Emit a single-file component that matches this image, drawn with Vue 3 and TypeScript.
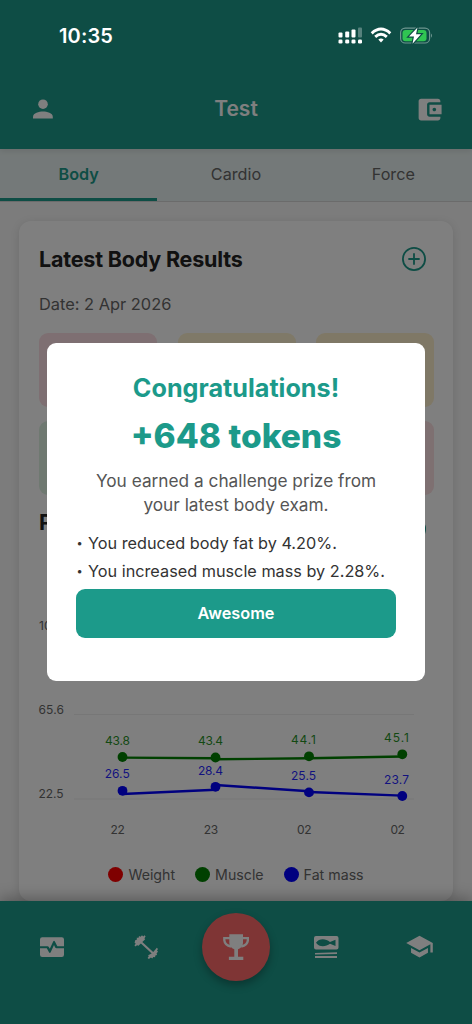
<script setup lang="ts">
interface Point { x: number; y: number; label: string; lx: number; ly: number }
interface Series { name: string; color: string; points: Point[]; segments: number[][] }

const tabs = ['Body', 'Cardio', 'Force']
const tiles = ['pink', 'yellow', 'gold', 'green', 'blue', 'rose']
const series: Series[] = [
  {
    name: 'muscle',
    color: '#008000',
    points: [
      { x: 122.5, y: 157, label: '43.8', lx: 117.5, ly: 144.5 },
      { x: 215.5, y: 157.5, label: '43.4', lx: 210.5, ly: 145 },
      { x: 309, y: 156.3, label: '44.1', lx: 303.5, ly: 143.8 },
      { x: 402.3, y: 154.3, label: '45.1', lx: 396.5, ly: 141.8 },
    ],
    segments: [[122.5, 157.6, 215.5, 158.3], [215.5, 159.3, 309, 158.3], [309, 158.3, 402, 156.5]],
  },
  {
    name: 'fat',
    color: '#0000ff',
    points: [
      { x: 122.5, y: 190.8, label: '26.5', lx: 117.2, ly: 178 },
      { x: 215.5, y: 186.8, label: '28.4', lx: 210.5, ly: 174.5 },
      { x: 309, y: 192.4, label: '25.5', lx: 303.5, ly: 180 },
      { x: 402.3, y: 196, label: '23.7', lx: 396.5, ly: 183.8 },
    ],
    segments: [[122.5, 194, 215.5, 189.8], [215.5, 185, 309, 191.2], [309, 192, 402, 195.6]],
  },
]
const axis = [
  { text: '22', x: 117.7 },
  { text: '23', x: 211 },
  { text: '02', x: 304.3 },
  { text: '02', x: 397.7 },
]
const legend = [
  { text: 'Weight', cls: 'red' },
  { text: 'Muscle', cls: 'green' },
  { text: 'Fat mass', cls: 'blue' },
]
const reasons = ['You reduced body fat by 4.20%.', 'You increased muscle mass by 2.28%.']
</script>

<template>
  <div class="screen">
    <header class="top">
      <svg class="icon" viewBox="0 0 24 24"><circle cx="12" cy="7.2" r="4.8" /><path d="M2 21.6v-1.8c0-3.6 6-5.2 10-5.2s9.800 1.600 9.800 5.200v1.800z" /></svg>
      <h1>Test</h1>
      <svg class="icon wallet" viewBox="0 0 24 24"><path d="M21 18v1c0 1.100-.9 2-2 2H5c-1.110 0-2-.9-2-2V5c0-1.100.89-2 2-2h14c1.100 0 2 .9 2 2v1h-9c-1.110 0-2 .9-2 2v8c0 1.100.89 2 2 2h9zm-9-2h10V8H12v8zm4-2.500c-.83 0-1.500-.67-1.500-1.500s.67-1.500 1.500-1.500 1.500.67 1.500 1.500-.67 1.500-1.500 1.500z" /></svg>
    </header>

    <nav class="tabs">
      <div v-for="(tab, i) in tabs" :key="tab" class="tab" :class="{ active: i === 0 }"><span>{{ tab }}</span></div>
    </nav>

    <main class="content">
      <section class="card">
        <div class="card-head">
          <h2>Latest Body Results</h2>
          <svg class="plus" viewBox="0 0 26 26"><circle cx="13" cy="13" r="11.1" /><path d="M13 8v10M8 13h10" /></svg>
        </div>
        <p class="date">Date: 2 Apr 2026</p>
        <div class="tiles">
          <div v-for="tile in tiles" :key="tile" class="tile" :class="tile"></div>
        </div>
        <div class="card-head progress">
          <h2>Progress</h2>
          <svg class="plus" viewBox="0 0 26 26"><circle cx="13" cy="13" r="11.1" /><path d="M13 8v10M8 13h10" /></svg>
        </div>
        <svg class="chart" viewBox="19 0 434 250">
          <path class="grid" d="M74 30.500H414M74 114.500H414M74 199H414" />
          <g class="axis">
            <text x="39" y="30">108.6</text>
            <text x="38.500" y="114" textLength="25.500">65.6</text>
            <text x="38.500" y="198" textLength="25">22.5</text>
            <text v-for="a in axis" :key="a.x" :x="a.x" y="234" text-anchor="middle" textLength="14.500">{{ a.text }}</text>
          </g>
          <g v-for="s in series" :key="s.name" :fill="s.color" :stroke="s.color">
            <line v-for="(l, i) in s.segments" :key="i" :x1="l[0]" :y1="l[1]" :x2="l[2]" :y2="l[3]" stroke-width="2.400" />
            <circle v-for="p in s.points" :key="p.x" :cx="p.x" :cy="p.y" r="4.900" stroke="none" />
            <text v-for="p in s.points" :key="p.label" class="value" :x="p.lx" :y="p.ly" textLength="25" text-anchor="middle">{{ p.label }}</text>
          </g>
        </svg>
        <div class="legend">
          <div v-for="l in legend" :key="l.text" class="key" :class="l.cls"><i></i><span>{{ l.text }}</span></div>
        </div>
      </section>
    </main>

    <footer class="bottom">
      <svg class="nav-icon first" viewBox="0 0 26 26"><path d="M3.200 3.200H22.800Q25 3.200 25 5.400V12.200H18.300L15.900 7.400Q15 6.200 14.200 7.500L10.800 14.800 9.800 12.900Q9.400 12.200 8.600 12.200H1V5.400Q1 3.200 3.200 3.200Z" /><path d="M1 14.200H7.800L10 18.300Q10.900 19.500 11.700 18.200L15 11 16.200 13.400Q16.700 14.200 17.500 14.200H25V20.800Q25 23 22.800 23H3.200Q1 23 1 20.800Z" /></svg>
      <svg class="nav-icon" viewBox="0 0 26 26"><path d="M2.200 6.200 4 5.600 3.700 3.800 5.600 3.700 6 2 7.600 2.700 9 1.200 10.200 2.400 11.600 1.300 12.600 2.600 11.400 4.300 12.200 5.200 9.300 8 20.200 18 22.600 15.200 23.800 13.700 25 14.900 24 16.600 25 17.700 23.600 19.200 24 21 22.300 21.400 22.100 23.200 20.300 23 19.300 24.600 17.900 23.600 15.900 25 14.600 24 15.800 22.200 15.100 21.200 18.700 19.500 7.900 9.400 5.100 12 4.200 11 2.600 12.400 1.400 11.300 2.800 9.700 1.600 8.800Z" /></svg>
      <div class="fab"><svg viewBox="0 0 26 26"><path d="M6.300.3H20V9Q19.700 13.600 15 15.300V22.700H20.300V25.900H5.900V22.700H11.300V15.300Q6.600 13.600 6.300 9Z" /><path class="handle" d="M7 4.200H1.300V6.200Q1.800 11.400 8 12.500M19.300 4.200H24.900V6.200Q24.400 11.400 18.300 12.500" /></svg></div>
      <svg class="nav-icon" viewBox="0 0 26 26"><path fill-rule="evenodd" d="M3 2H23.500Q25.500 2 25.500 4V13.500Q25.500 15.500 23.500 15.500H3Q1 15.500 1 13.500V4Q1 2 3 2ZM3 8.800C6 13.300 12.500 13.300 17 9.800L22.500 12V5.800L17 8C12.500 4.300 6 4.300 3 8.800Z" /><path d="M2 18.900 24 18.200V19.900L2 20.500ZM2 22H24V23.900H2Z" /></svg>
      <svg class="nav-icon cap" viewBox="0 0 24 24"><path d="M5 13.180v4L12 21l7-3.820v-4L12 17l-7-3.820zM12 3 1 9l11 6 9-4.910V17h2V9L12 3z" /></svg>
    </footer>

    <div class="overlay">
      <div class="modal">
        <h3>Congratulations!</h3>
        <div class="tokens">+648 tokens</div>
        <p class="message">You earned a challenge prize from<br />your latest body exam.</p>
        <ul>
          <li v-for="r in reasons" :key="r"><b>•</b><span>{{ r }}</span></li>
        </ul>
        <button type="button">Awesome</button>
      </div>
    </div>

    <div class="status">
      <span class="time">10:35</span>
      <svg viewBox="0 0 96 20">
        <g fill="#fff">
          <rect x="0.500" y="6.500" width="4" height="5" rx="1" /><rect x="7.200" y="5.500" width="4" height="6" rx="1" /><rect x="13.500" y="3.500" width="4" height="8" rx="1" /><rect x="20" y="1.500" width="4" height="10" rx="1" opacity=".3" />
          <rect x="0.500" y="13.500" width="4" height="4" rx="1.300" /><rect x="7.200" y="13.500" width="4" height="4" rx="1.300" /><rect x="13.500" y="13.500" width="4" height="4" rx="1.300" /><rect x="20" y="13.500" width="4" height="4" rx="1.300" />
          <path d="M40.300 13.400Q43 11.400 45.700 13.400L43 16.600Z" />
        </g>
        <g fill="none" stroke="#fff" stroke-width="2.900"><path d="M33.700 7.300Q43 -1.100 52.300 7.300" /><path d="M37.200 10.900Q43 5.700 48.800 10.900" /></g>
        <rect x="62.600" y="2.200" width="29" height="14.800" rx="4.600" fill="none" stroke="#6e9690" stroke-width="1.200" />
        <path d="M93 7.500Q95 9.500 93 11.800Z" fill="#6e9690" />
        <rect x="64.500" y="4" width="24" height="11.200" rx="3" fill="#30c552" />
        <path d="M79.500 1.500 71 10.600H76L74.500 17.700 83 8.300H78Z" fill="#fff" stroke="#0e4d45" stroke-width="2.400" paint-order="stroke" />
      </svg>
    </div>
  </div>
</template>

<style>
html, body { margin: 0; background: #7c7c7c; }
</style>

<style scoped>
.screen { position: relative; width: 472px; height: 1024px; overflow: hidden; display: flex; flex-direction: column; background: #f8f8f8; font-family: Inter, "Liberation Sans", sans-serif; color: #222; }
h1, h2, h3, p, ul { margin: 0; padding: 0; }
.top { box-sizing: border-box; height: 149px; flex: none; padding: 69px 30px 0 31px; background: #1c9a8a; display: flex; align-items: center; justify-content: space-between; color: #fff; box-shadow: 0 2px 6px rgba(0, 0, 0, .1); z-index: 1; }
.icon { width: 24px; height: 24px; fill: #fff; }
.wallet { width: 29px; height: 29px; margin-right: -2px; }
h1 { font-size: 21px; line-height: 30px; font-weight: 600; padding-left: 2px; }
.tabs { height: 52px; flex: none; display: grid; grid-template-columns: repeat(3, 1fr); background: #e9f3f2; border-bottom: 1px solid #d6d6d6; }
.tab { box-sizing: border-box; display: flex; align-items: center; justify-content: center; padding-top: 1px; border-bottom: 3px solid transparent; font-size: 16.2px; color: #666; }
.tab.active { color: #1c9a8a; border-color: #1c9a8a; font-weight: 600; }
.content { flex: 1; min-height: 0; padding: 19px 19px 0; }
.card { box-sizing: border-box; height: 680px; border-radius: 12px; background: #fff; box-shadow: 0 2px 10px rgba(0, 0, 0, .12); padding-top: 23px; }
.card-head { display: flex; align-items: center; justify-content: space-between; height: 30px; padding: 0 26px 0 20px; }
h2 { font-size: 21.5px; line-height: 30px; font-weight: 700; letter-spacing: -.2px; }
.plus { width: 26px; height: 26px; fill: none; stroke: #1c9a8a; stroke-width: 1.8; stroke-linecap: round; }
.date { margin: 18px 20px 0; font-size: 16.4px; line-height: 24px; color: #666; }
.tiles { display: grid; grid-template-columns: repeat(3, 118px); justify-content: space-between; gap: 14px 0; margin: 17px 19px 0 20px; }
.tile { height: 74px; border-radius: 9px; }
.pink { background: #fddfe4; } .yellow { background: #fff3d0; } .gold { background: #fff0cd; }
.green { background: #dff2e3; } .blue { background: #dfeefa; } .rose { background: #fde0e2; }
.progress { margin-top: 12px; }
.progress .plus { margin-top: 14px; }
.chart { display: block; width: 434px; height: 250px; margin-top: 63px; }
.grid { stroke: #efefef; stroke-width: 1; }
.axis text { font-size: 12px; fill: #666; }
.value { font-size: 12px; stroke: none; opacity: .85; }
.legend { display: flex; justify-content: center; gap: 20px; margin-top: 13px; }
.key { display: flex; align-items: center; gap: 5px; height: 22px; font-size: 14.2px; color: #666; }
.key i { width: 15px; height: 15px; border-radius: 50%; }
.red i { background: red; } .key.green, .key.blue { background: none; } .key.green i { background: green; } .key.blue i { background: blue; }
.bottom { height: 123px; flex: none; box-sizing: border-box; padding-top: 12px; display: flex; align-items: flex-start; justify-content: center; gap: 43px; background: #1c9a8a; box-shadow: 0 -3px 14px rgba(0, 0, 0, .3); z-index: 1; }
.nav-icon { width: 26px; height: 26px; margin-top: 21px; fill: #fff; }
.first { margin-right: 25px; }
.cap { width: 29px; height: 29px; margin: 19px -1px 0 23px; }
.fab { width: 68px; height: 68px; border-radius: 50%; background: #ff6b6b; display: flex; align-items: center; justify-content: center; box-shadow: 0 4px 8px rgba(0, 0, 0, .3); }
.fab svg { width: 26px; height: 26px; fill: #fff; }
.handle { fill: none; stroke: #fff; stroke-width: 2.3; }
.overlay { position: absolute; inset: 0; z-index: 2; background: rgba(0, 0, 0, .5); display: flex; align-items: center; justify-content: center; }
.modal { box-sizing: border-box; width: 378px; height: 338px; border-radius: 9px; background: #fff; padding: 27px 29px 0; text-align: center; color: #333; }
h3 { font-size: 25.2px; line-height: 36px; font-weight: 700; color: #1c9a8a; }
.tokens { margin-top: 8px; font-size: 33.5px; line-height: 44px; font-weight: 800; color: #1c9a8a; }
.message { margin-top: 11px; font-size: 17.25px; line-height: 24px; color: #555; }
ul { list-style: none; margin-top: 13px; text-align: left; }
li { display: flex; height: 27.500px; line-height: 27px; font-size: 16.25px; white-space: nowrap; }
li b { box-sizing: border-box; width: 12px; padding-left: 1px; font-size: 11px; }
button { display: block; width: 320px; height: 49px; margin-top: 3.500px; border: 0; border-radius: 9px; background: #1c9a8a; color: #fff; font: 600 16.3px/49px Inter, "Liberation Sans", sans-serif; padding: 0; }
.status { position: absolute; z-index: 3; top: 0; left: 0; right: 0; height: 71px; box-sizing: border-box; padding: 0 38px 0 59px; display: flex; align-items: center; justify-content: space-between; color: #fff; }
.time { font-size: 20px; font-weight: 600; letter-spacing: .15px; }
.status svg { width: 96px; height: 20px; }
</style>
